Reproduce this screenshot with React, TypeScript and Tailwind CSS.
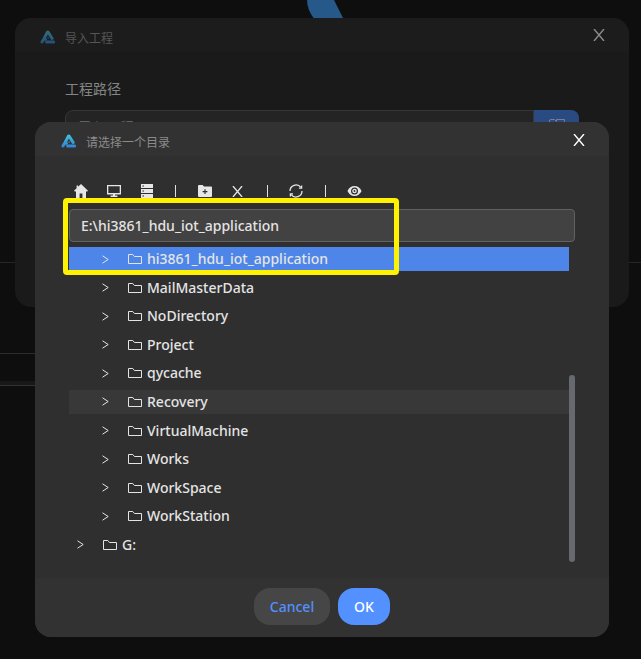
import React from "react";

const folders = [
  "hi3861_hdu_iot_application",
  "MailMasterData",
  "NoDirectory",
  "Project",
  "qycache",
  "Recovery",
  "VirtualMachine",
  "Works",
  "WorkSpace",
  "WorkStation",
];

function Logo() {
  return (
    <svg width="16" height="14" viewBox="0 0 16 14" aria-hidden="true">
      <defs>
        <linearGradient id="brand" gradientUnits="userSpaceOnUse" x1="0" y1="0" x2="0" y2="14">
          <stop offset="0" stopColor="#45c4d8" />
          <stop offset="1" stopColor="#2f80d8" />
        </linearGradient>
      </defs>
      <g fill="none" stroke="url(#brand)" strokeWidth="3" strokeLinecap="round">
        <path d="M8 2 12.2 8.6" />
        <path d="M7.4 2.200 4.200 8.200 2 12" />
        <path d="M6.600 12H13.600" />
      </g>
      <path fill="url(#brand)" d="M4.600 8.600H9.200L8 6.800 6.400 10.800H3.600Z" />
    </svg>
  );
}

function Close({ size = 12 }: { size?: number }) {
  return (
    <svg width={size} height={size} viewBox="0 0 12 12" stroke="currentColor" fill="none" strokeWidth="1.4" aria-hidden="true">
      <path d="M1 0 11 12M11 0 1 12" />
    </svg>
  );
}

function FolderIcon() {
  return (
    <svg width="14" height="12" viewBox="0 0 14 12" fill="none" stroke="currentColor" aria-hidden="true">
      <path d="M0.5 10.5V1.5H4.8L6.4 3.5H13.5V10.5Z" />
    </svg>
  );
}

function Chevron() {
  return (
    <svg width="7" height="9" viewBox="0 0 7 9" fill="none" stroke="currentColor" aria-hidden="true">
      <path d="M0.5 0.8 6.2 4.5 0.5 8.2" />
    </svg>
  );
}

function TreeRow({ name, state = "", root = false }: { name: string; state?: string; root?: boolean }) {
  const tone = state === "selected" ? "bg-[#4d86e8]" : state === "hover" ? "bg-[#383838]" : "";
  return (
    <li className={`flex h-6 items-center text-[#e4e4e4] ${root ? "pl-2" : "pl-[33px]"} ${tone}`}>
      <button type="button" aria-label={`展开 ${name}`} className="flex w-[26px] items-center">
        <Chevron />
      </button>
      <button type="button" className="flex items-center gap-[5px] text-[14px] leading-6 font-medium">
        <FolderIcon />
        <span>{name}</span>
      </button>
    </li>
  );
}

function Divider() {
  return <span className="h-3 w-px bg-[#e0e0e0]" />;
}

function Toolbar() {
  return (
    <div className="flex h-4 items-center pl-[5px] text-[#e6e6e6]">
      <button type="button" aria-label="主目录" className="w-[33px]">
        <svg width="14" height="14" viewBox="0 0 14 14" fill="currentColor">
          <path d="M7 0 14 6.8 13.2 7.6H12V14H8.4V9.4H5.6V14H2V7.6H0.8L0 6.8 2.6 4.2V1.4H4.2V2.7Z" />
        </svg>
      </button>
      <button type="button" aria-label="桌面" className="w-[34px]">
        <svg width="14" height="12" viewBox="0 0 14 12" fill="currentColor">
          <path fillRule="evenodd" d="M0 0H14V9.4H0ZM1.3 1.3V8H12.7V1.3ZM6 9.4H8V10.6H10.4V12H3.6V10.6H6Z" />
        </svg>
      </button>
      <button type="button" aria-label="磁盘" className="w-[34px]">
        <svg width="12" height="14" viewBox="0 0 12 14" fill="currentColor">
          <path fillRule="evenodd" d="M0 0H12V4H0ZM0 5H12V9H0ZM0 10H12V14H0ZM1.4 1.5V2.5H3V1.5ZM1.4 6.5V7.5H3V6.5ZM1.4 11.5V12.5H3V11.5Z" />
        </svg>
      </button>
      <Divider />
      <button type="button" aria-label="新建文件夹" className="ml-[22px] w-[34px]">
        <svg width="14" height="12" viewBox="0 0 14 12" fill="currentColor">
          <path fillRule="evenodd" d="M0 1Q0 0 1 0H4.6L6 1.6H13Q14 1.6 14 2.6V11Q14 12 13 12H1Q0 12 0 11ZM6.4 4.2V6H4.6V7.3H6.4V9.1H7.6V7.3H9.4V6H7.6V4.2Z" />
        </svg>
      </button>
      <button type="button" aria-label="删除" className="w-[35px]">
        <Close size={11} />
      </button>
      <Divider />
      <button type="button" aria-label="刷新" className="ml-[21px] w-[36px]">
        <svg width="14" height="14" viewBox="0 0 14 14" fill="none" stroke="currentColor" strokeWidth="1.3">
          <path d="M1 7A6 6 0 0 1 11.8 3.400M13 7A6 6 0 0 1 2.200 10.600" />
          <path d="M12.600 1.400V4.200H10M1.400 12.600V9.800H4" />
        </svg>
      </button>
      <Divider />
      <button type="button" aria-label="显示隐藏文件" className="ml-[21px]">
        <svg width="15" height="12" viewBox="0 0 16 12">
          <path fill="currentColor" d="M0.5 6Q3 0.6 8 0.6T15.500 6Q13 11.400 8 11.400T0.500 6Z" />
          <circle cx="8" cy="6" r="3.100" fill="#e6e6e6" stroke="#2f2f2f" strokeWidth="1.300" />
          <circle cx="8" cy="6" r="1" fill="#2f2f2f" />
        </svg>
      </button>
    </div>
  );
}

export default function App() {
  return (
    <main className="relative h-screen overflow-hidden bg-[#0e0e0e] font-['Noto_Sans','Noto_Sans_CJK_SC',sans-serif]">
      <svg className="absolute top-0 left-[306px]" width="40" height="20" aria-hidden="true">
        <path fill="#26588a" d="M1 0H28L38 20H9Q1 10 1 0Z" />
      </svg>
      <div className="absolute inset-x-0 top-[262px] h-px bg-[#25272d]" />
      <div className="absolute top-[353px] left-0 h-px w-1/2 bg-[#2b2b2e]" />
      <div className="absolute top-[381px] left-0 h-[5px] w-1/2 border-b border-[#333333] bg-[#181818]" />

      <section aria-label="导入工程" className="absolute top-[18px] right-3 left-[15px] h-[289px] rounded-2xl bg-[#1a1a1a]">
        <header className="flex h-[34px] items-center rounded-t-2xl bg-[#1c1c1c] pr-6 pl-[25px]">
          <span className="pt-1 opacity-50"><Logo /></span>
          <h1 className="ml-[9px] flex-1 pt-[7px] text-[12px] leading-5 text-[#565656]">导入工程</h1>
          <button type="button" aria-label="关闭" className="text-[#8c8c8c]"><Close /></button>
        </header>
        <div className="pt-[26px] pr-[50px] pl-[50px]">
          <label htmlFor="project" className="block text-[14px] leading-[22px] text-[#858585]">工程路径</label>
          <div className="mt-[10px] flex h-8">
            <input id="project" placeholder="导入工程" className="min-w-0 flex-1 rounded-l-lg border border-[#363636] bg-[#242424] px-3 text-[14px] placeholder:text-[#626262]" />
            <button type="button" aria-label="浏览" className="flex w-[45px] items-center justify-center rounded-r-lg bg-[#2a4a82] text-[#7b7f88]">
              <svg width="16" height="14" viewBox="0 0 16 14" fill="none" stroke="currentColor"><path d="M0.500 13V2Q0.500 0.500 2 0.500H5.500L7.500 2.500V0.500H15.500V13Z" /></svg>
            </button>
          </div>
        </div>
      </section>

      <section role="dialog" aria-label="请选择一个目录" className="absolute top-[122px] right-8 left-[35px] flex h-[515px] flex-col rounded-2xl bg-[#2f2f2f]">
        <header className="flex h-[34px] items-center rounded-t-2xl bg-[#323232] pr-6 pl-[26px]">
          <span className="pt-1"><Logo /></span>
          <h2 className="ml-[9px] flex-1 pt-[7px] text-[12px] leading-5 text-[#8b8b8b]">请选择一个目录</h2>
          <button type="button" aria-label="关闭" className="pt-[2px] text-white"><Close /></button>
        </header>
        <div className="flex-1 pt-[27px] pr-[34px] pl-[34px]">
          <Toolbar />
          <input
            aria-label="目录路径"
            defaultValue="E:\hi3861_hdu_iot_application"
            className="mt-[10px] block h-[33px] w-full rounded-sm border border-[#626262] bg-[#424242] px-[11px] text-[14px] font-medium text-[#e4e4e4]"
          />
          <div className="mt-[5px] flex">
            <ul className="flex h-[310px] flex-1 flex-col justify-between">
              {folders.map((name, i) => (
                <TreeRow key={name} name={name} state={i === 0 ? "selected" : i === 5 ? "hover" : ""} />
              ))}
              <TreeRow name="G:" root />
            </ul>
            <div className="flex w-[6px] flex-col pt-32">
              <div className="h-[187px] rounded-sm bg-[#66696e]" />
            </div>
          </div>
        </div>
        <footer className="flex h-[59px] justify-center gap-2 rounded-b-2xl bg-[#323232] pt-[10px]">
          <button type="button" className="h-[37px] w-[76px] rounded-2xl bg-[#464646] text-[14px] font-medium text-[#5291ff]">Cancel</button>
          <button type="button" className="h-[37px] w-[52px] rounded-2xl bg-[#5291ff] text-[14px] font-medium text-white">OK</button>
        </footer>
      </section>
      <div className="pointer-events-none absolute top-[198px] left-[63px] h-[77px] w-[336px] rounded-sm border-5 border-[#fff200]" />
    </main>
  );
}
